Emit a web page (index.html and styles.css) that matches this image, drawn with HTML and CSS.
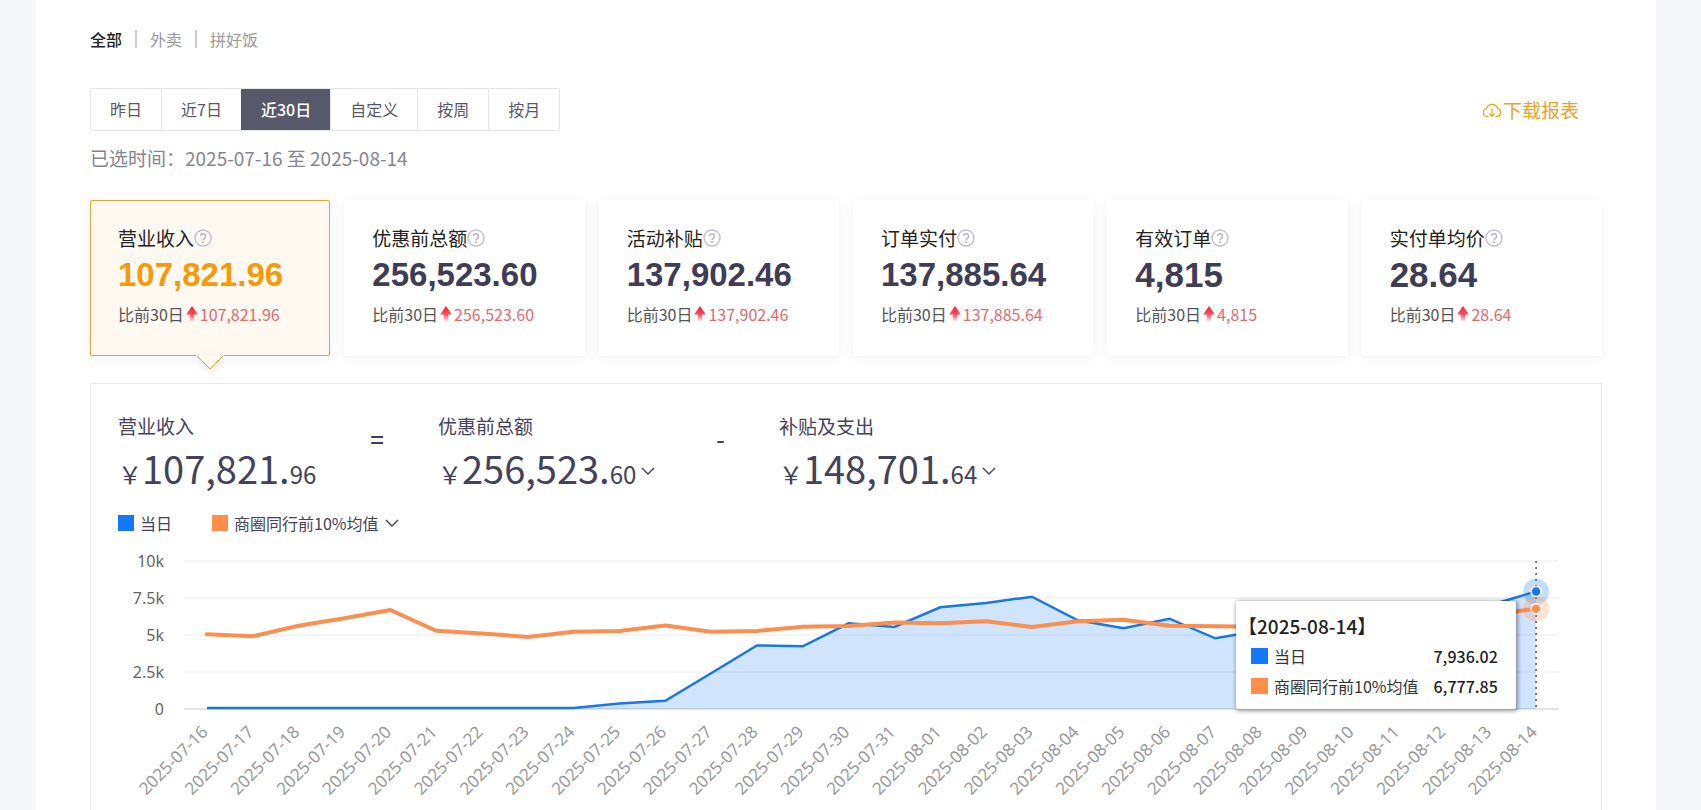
FILE: index.html
```html
<!DOCTYPE html>
<html lang="zh-CN">
<head>
<meta charset="utf-8">
<title>经营数据</title>
<meta name="viewport" content="width=device-width, initial-scale=1">
<link rel="stylesheet" href="styles.css">
</head>
<body>
<svg class="defs" width="0" height="0" aria-hidden="true">
  <defs>
    <linearGradient id="rise" x1="0" y1="0" x2="0" y2="1">
      <stop offset="0" stop-color="#f5222d"/>
      <stop offset="0.55" stop-color="#ff4d5e"/>
      <stop offset="1" stop-color="#ff4d5e" stop-opacity="0.1"/>
    </linearGradient>
    <symbol id="help" viewBox="0 0 18 18">
      <circle cx="9" cy="9" r="8" fill="none" stroke="#c0c0cc" stroke-width="1.4"/>
      <path d="M6.500 7.200a2.500 2.500 0 1 1 3.800 2.100c-.9.6-1.300 1-1.300 1.900" fill="none" stroke="#b2b2c0" stroke-width="1.500"/>
      <circle cx="9" cy="13.200" r="1" fill="#b2b2c0"/>
    </symbol>
    <symbol id="up" viewBox="0 0 14 18">
      <path d="M7 1 12.800 9.500H9.200V16.500H4.800V9.500H1.200Z" fill="url(#rise)"/>
    </symbol>
    <symbol id="chevron" viewBox="0 0 14 14">
      <path d="M1 4 7 10 13 4" fill="none" stroke="#43425a" stroke-width="1.400"/>
    </symbol>
  </defs>
</svg>
<main class="page">
  <nav class="channels">
    <a class="channel is-active" href="#all">全部</a>
    <a class="channel" href="#waimai">外卖</a>
    <a class="channel" href="#pinhaofan">拼好饭</a>
  </nav>

  <div class="toolbar">
    <div class="ranges">
      <button class="range" type="button">昨日</button>
      <button class="range" type="button">近7日</button>
      <button class="range is-active" type="button">近30日</button>
      <button class="range" type="button">自定义</button>
      <button class="range" type="button">按周</button>
      <button class="range" type="button">按月</button>
    </div>
    <a class="download" href="#download">
      <svg class="download-icon" viewBox="0 0 20 16" aria-hidden="true"><path d="M6.500 14.500H5.200A4.100 4.100 0 0 1 4.600 6.400 5.700 5.700 0 0 1 15.500 6.300 4.200 4.200 0 0 1 15 14.500H13.500M10 6.500V14.500M7.300 11.800 10 14.500 12.700 11.800" fill="none" stroke="currentColor" stroke-width="1.200"/></svg>
      <span>下载报表</span>
    </a>
  </div>
  <p class="period">已选时间：2025-07-16 至 2025-08-14</p>

  <section class="cards">
    <article class="card is-active">
      <h2 class="card-title">营业收入<svg class="help"><use href="#help"/></svg></h2>
      <p class="card-value">107,821.96</p>
      <p class="card-compare">比前30日<svg class="up"><use href="#up"/></svg><span class="rise">107,821.96</span></p>
      <svg class="pointer" viewBox="0 0 28 15" aria-hidden="true"><path d="M0 0H28V1L14 14 0 1Z" fill="#fff9f1"/><path d="M1 1 14 14 27 1" fill="none" stroke="#e0a52f"/></svg>
    </article>
    <article class="card">
      <h2 class="card-title">优惠前总额<svg class="help"><use href="#help"/></svg></h2>
      <p class="card-value">256,523.60</p>
      <p class="card-compare">比前30日<svg class="up"><use href="#up"/></svg><span class="rise">256,523.60</span></p>
    </article>
    <article class="card">
      <h2 class="card-title">活动补贴<svg class="help"><use href="#help"/></svg></h2>
      <p class="card-value">137,902.46</p>
      <p class="card-compare">比前30日<svg class="up"><use href="#up"/></svg><span class="rise">137,902.46</span></p>
    </article>
    <article class="card">
      <h2 class="card-title">订单实付<svg class="help"><use href="#help"/></svg></h2>
      <p class="card-value">137,885.64</p>
      <p class="card-compare">比前30日<svg class="up"><use href="#up"/></svg><span class="rise">137,885.64</span></p>
    </article>
    <article class="card">
      <h2 class="card-title">有效订单<svg class="help"><use href="#help"/></svg></h2>
      <p class="card-value is-short">4,815</p>
      <p class="card-compare">比前30日<svg class="up"><use href="#up"/></svg><span class="rise">4,815</span></p>
    </article>
    <article class="card">
      <h2 class="card-title">实付单均价<svg class="help"><use href="#help"/></svg></h2>
      <p class="card-value is-short">28.64</p>
      <p class="card-compare">比前30日<svg class="up"><use href="#up"/></svg><span class="rise">28.64</span></p>
    </article>
  </section>

  <section class="panel">
    <div class="formula">
      <div class="term">
        <h3 class="term-label">营业收入</h3>
        <p class="term-value">￥<span class="big">107,821.</span>96</p>
      </div>
      <span class="operator">=</span>
      <div class="term">
        <h3 class="term-label">优惠前总额</h3>
        <p class="term-value">￥<span class="big">256,523.</span>60<svg class="term-chevron"><use href="#chevron"/></svg></p>
      </div>
      <span class="operator">-</span>
      <div class="term">
        <h3 class="term-label">补贴及支出</h3>
        <p class="term-value">￥<span class="big">148,701.</span>64<svg class="term-chevron"><use href="#chevron"/></svg></p>
      </div>
    </div>

    <div class="legend">
      <span class="legend-item"><i class="swatch today"></i>当日</span>
      <span class="legend-item"><i class="swatch peer"></i>商圈同行前10%均值<svg class="chevron"><use href="#chevron"/></svg></span>
    </div>

    <div class="chart">
      <svg class="plot" id="plot" viewBox="0 0 1456 248" role="img" aria-label="营业收入趋势"></svg>
      <div class="tooltip">
        <p class="tooltip-title">【2025-08-14】</p>
        <p class="tooltip-row"><i class="swatch today"></i><span>当日</span><b>7,936.02</b></p>
        <p class="tooltip-row"><i class="swatch peer"></i><span>商圈同行前10%均值</span><b>6,777.85</b></p>
      </div>
    </div>
  </section>
</main>
<script src="chart.js"></script>
</body>
</html>
```

FILE: styles.css
```css
* { box-sizing: border-box; }

body {
  margin: 0;
  background: #f6f7f9;
  color: #222;
  font-family: "Noto Sans CJK SC", "Noto Sans", sans-serif;
  font-size: 16px;
}

h2, h3, p { margin: 0; font-weight: 400; }
a { text-decoration: none; }
.defs { position: absolute; }

.page {
  display: flex;
  flex-direction: column;
  min-height: 100vh;
  margin: 0 45px 0 36px;
  padding: 27px 54px 0;
  background: #fff;
}

.channels { display: flex; align-items: center; line-height: 24px; }
.channel { color: #999; }
.channel.is-active { color: #222; font-weight: 500; }
.channel + .channel::before {
  content: "";
  display: inline-block;
  width: 2px;
  height: 18px;
  margin: 0 13px;
  vertical-align: -2px;
  background: #ccc;
}

.toolbar {
  display: flex;
  justify-content: space-between;
  align-items: center;
  margin-top: 37px;
}
.ranges { display: flex; border: 1px solid #e4e7ec; border-radius: 2px; }
.range {
  height: 41px;
  padding: 0 19px 2px;
  border: 0;
  border-left: 1px solid #e4e7ec;
  background: #fff;
  color: #58586a;
  font: inherit;
}
.range:first-child { border-left: 0; }
.range.is-active { border-color: #58586b; background: #58586b; color: #fff; font-weight: 500; }

.download {
  display: flex;
  align-items: center;
  gap: 1px;
  margin-right: 23px;
  color: #f2a01e;
  font-size: 19px;
  line-height: 28px;
}
.download-icon { width: 20px; height: 16px; }

.period { margin-top: 13px; color: #85858f; font-size: 19px; line-height: 28px; }

.cards {
  display: grid;
  grid-template-columns: repeat(6, 1fr);
  gap: 14px;
  margin-top: 28px;
}
.card {
  position: relative;
  padding: 23px 27px 29px;
  border: 1px solid transparent;
  border-radius: 2px;
  background: #fff;
  box-shadow: 0 2px 14px rgba(0, 0, 0, 0.06);
}
.card.is-active { border-color: #e0a52f; background: #fff9f1; }
.card-title { display: flex; align-items: center; font-size: 19px; line-height: 28px; color: #222; }
.help { width: 18px; height: 18px; }
.card-value {
  margin-top: 3px;
  color: #3f3d56;
  font: bold 33px/40px "Liberation Sans", Arial, sans-serif;
}
.card-value.is-short { font-size: 35px; }
.is-active .card-value { color: #f59a0b; }
.card-compare { display: flex; align-items: center; margin-top: 7px; line-height: 24px; color: #555; }
.up { width: 14px; height: 18px; margin: 0 1px; }
.rise { color: #e5696d; }
.pointer {
  position: absolute;
  top: 100%;
  left: calc(50% - 14px);
  width: 28px;
  height: 15px;
  filter: drop-shadow(0 3px 4px rgba(0, 0, 0, 0.08));
}

.panel {
  flex: 1;
  margin-top: 27px;
  padding: 28px 27px 0;
  border: 1px solid #e9e9ec;
  border-bottom: 0;
  color: #43425a;
}
.formula { display: flex; align-items: flex-start; gap: 54px; }
.term-label { font-size: 19px; line-height: 28px; }
.term-value { display: flex; align-items: baseline; font-size: 24px; line-height: 56px; white-space: nowrap; }
.big { font-size: 38px; }
.operator { font-size: 24px; font-weight: 500; line-height: 54px; }
.term-chevron { align-self: center; width: 14px; height: 14px; margin: 0 7px 0 5px; }

.legend { display: flex; gap: 40px; margin-top: 9px; line-height: 24px; }
.legend-item { display: flex; align-items: center; }
.swatch { width: 16px; height: 16px; margin-right: 6px; }
.today { background: #1377f9; }
.peer { background: #ff8e4a; }
.chevron { width: 14px; height: 14px; margin-left: 6px; }

.chart { position: relative; margin-top: 15px; }
.plot { display: block; width: 100%; overflow: visible; font-family: "Noto Sans", "Open Sans", sans-serif; }
.grid { stroke: #f5f5f6; stroke-width: 2; }
.axis { stroke: #e3e3e6; stroke-width: 2; }
.area { fill: #1377f9; fill-opacity: 0.2; }
.line-today { fill: none; stroke: #1a76e6; stroke-width: 2.500; }
.line-peer { fill: none; stroke: #fa8f50; stroke-width: 4; stroke-linecap: round; stroke-linejoin: round; }
.y-label { fill: #666; font-size: 16px; text-anchor: end; }
.x-label { fill: #999; font-size: 17px; text-anchor: end; }
.cursor { stroke: #555; stroke-width: 1.500; stroke-dasharray: 2 4; }
.halo-today { fill: #1377f9; fill-opacity: 0.25; }
.halo-peer { fill: #ff8e4a; fill-opacity: 0.25; }
.dot-today { fill: #1377f9; stroke: #fff; stroke-width: 1.500; }
.dot-peer { fill: #ff8e4a; stroke: #fff; stroke-width: 1.500; }

.tooltip {
  position: absolute;
  top: 51px;
  right: 4%;
  padding: 10px 18px 8px 15px;
  border-radius: 2px;
  background: #fff;
  box-shadow: 1px 1px 4px 1px rgba(0, 0, 0, 0.4);
  color: #333;
}
.tooltip-title { margin-left: -13px; color: #222; font-size: 19px; font-weight: 500; line-height: 30px; }
.tooltip-row { display: flex; align-items: center; line-height: 30px; }
.tooltip-row .swatch { width: 17px; }
.tooltip-row b { margin-left: auto; padding-left: 15px; color: #222; font-weight: 500; }
```

FILE: chart.js
```js
const today = [60, 60, 60, 60, 60, 60, 60, 60, 60, 370, 560, 2410, 4300, 4235, 5790, 5540,
  6870, 7160, 7590, 5990, 5450, 6100, 4780, 5310, 5600, 5900, 6200, 6600, 7030, 7936.02];
const peer = [5050, 4910, 5630, 6130, 6690, 5290, 5110, 4865, 5220, 5270, 5640, 5220, 5270, 5560, 5610, 5845,
  5790, 5925, 5540, 5925, 6035, 5630, 5590, 5560, 5600, 5700, 5800, 6000, 6350, 6777.85];

const LEFT = 66, RIGHT = 1441, TOP = 11, BASE = 159;
const step = (RIGHT - LEFT) / today.length;
const x = i => LEFT + step * (i + 0.5);
const y = v => BASE - v / 10000 * (BASE - TOP);
const path = series => series.map((v, i) => (i ? "L" : "M") + x(i).toFixed(1) + " " + y(v).toFixed(1)).join("");
const day = i => new Date(Date.UTC(2025, 6, 16 + i)).toISOString().slice(0, 10);

let out = "";
[[10000, "10k"], [7500, "7.5k"], [5000, "5k"], [2500, "2.5k"], [0, "0"]].forEach(([v, label]) => {
  out += `<line class="${v ? "grid" : "axis"}" x1="${LEFT}" x2="${RIGHT}" y1="${y(v)}" y2="${y(v)}"/>`;
  out += `<text class="y-label" x="46" y="${y(v) + 6}">${label}</text>`;
});
const last = today.length - 1;
out += `<path class="area" d="${path(today)}L${x(last)} ${BASE}L${x(0)} ${BASE}Z"/>`;
out += `<path class="line-today" d="${path(today)}"/>`;
out += `<path class="line-peer" d="${path(peer)}"/>`;
out += `<line class="cursor" x1="${x(last)}" x2="${x(last)}" y1="${TOP}" y2="${BASE}"/>`;
[["today", today], ["peer", peer]].forEach(([name, s]) => {
  out += `<circle class="halo-${name}" cx="${x(last)}" cy="${y(s[last])}" r="13"/>`;
  out += `<circle class="dot-${name}" cx="${x(last)}" cy="${y(s[last])}" r="5"/>`;
});
today.forEach((_, i) => {
  out += `<text class="x-label" transform="translate(${(x(i) + 2).toFixed(1)} ${BASE + 24}) rotate(-45)">${day(i)}</text>`;
});
document.getElementById("plot").innerHTML = out;
```
